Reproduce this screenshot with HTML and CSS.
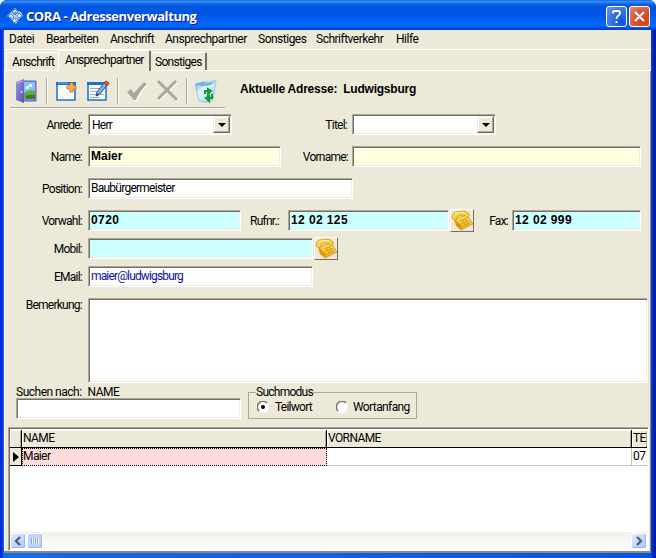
FILE: index.html
```html
<!DOCTYPE html>
<html lang="de">
<head>
<meta charset="utf-8">
<title>CORA - Adressenverwaltung</title>
<link rel="stylesheet" href="styles.css">
</head>
<body>
<svg width="0" height="0" class="defs">
  <defs>
    <linearGradient id="gold" x1="0" y1="0" x2="0" y2="1"><stop offset="0" stop-color="#ffe45c"/><stop offset="1" stop-color="#eea818"/></linearGradient>
    <linearGradient id="door" x1="0" y1="0" x2="1" y2="1"><stop offset="0" stop-color="#9a94e8"/><stop offset="1" stop-color="#5650b4"/></linearGradient>
    <linearGradient id="bin" x1="0" y1="0" x2="1" y2="1"><stop offset="0" stop-color="#5ba4dc"/><stop offset=".4" stop-color="#e4f8ff"/><stop offset="1" stop-color="#8cc4ec"/></linearGradient>
    <symbol id="phone" viewBox="0 0 22 21">
      <path d="M4 9 L16 5 L22 14 L10 20 Z" fill="url(#gold)" stroke="#c98d18" stroke-width=".7"/>
      <path d="M3 9 L5 16 L10 20 L11 16Z" fill="#df9510"/>
      <path d="M1 6 Q2 2 8 1.500 Q15 0 18 4 Q19 7 16 7.500 L14 5.500 Q10 4 6 6.500 L6 9 Q3 11 1 8Z" fill="#f9d548" stroke="#c68b17" stroke-width=".7"/>
      <path d="M9 11l7-3M10.500 13.500l7-3M12 16l7-3M11 9.500l4 6M14 8.500l4 6" stroke="#c48d22" stroke-width=".7"/>
      <path d="M4 3.500Q9 1.500 14 3" stroke="#fff09a" fill="none"/>
    </symbol>
  </defs>
</svg>
<div class="window">
  <header class="titlebar">
    <svg class="appicon" width="16" height="16" viewBox="0 0 16 16">
      <path d="M8 0L11 3 14 4 16 8 12 11 9 16 6 14 4 11 0 8 4 4Z" fill="#a8d4fc"/>
      <path d="M8 1l3 3-3 3-3-3zM12 5l3 3-3 2-2-2zM4 6l3 3-3 2-3-3zM8 10l3 1-3 4-3-2z" fill="#eef8ff" stroke="#174eaa" stroke-width=".7"/>
      <path d="M7 4h2v2H7zM3 9h2M8 12h1" stroke="#315f98" stroke-width=".7" fill="none"/>
    </svg>
    <h1>CORA - Adressenverwaltung</h1>
    <span class="capbtn help"><svg width="19" height="19" viewBox="0 0 19 19"><path d="M6 6.500V5.500Q6 4 7.500 4H11Q13 4 13 6Q13 7.500 11.500 8.500Q9.500 9.500 9.500 12M9.500 14V16" fill="none" stroke="#fff" stroke-width="1.900"/></svg></span>
    <span class="capbtn close"><svg width="19" height="19" viewBox="0 0 19 19"><path d="M5 5L14 14M14 5L5 14" stroke="#fff" stroke-width="2.200"/></svg></span>
  </header>
  <nav class="menu"><span class="m1">Datei</span><span class="m2">Bearbeiten</span><span class="m3">Anschrift</span><span class="m4">Ansprechpartner</span><span class="m5">Sonstiges</span><span class="m6">Schriftverkehr</span><span class="m7">Hilfe</span></nav>
  <div class="tabs"><span class="tab first">Anschrift</span><span class="tab active">Ansprechpartner</span><span class="tab last">Sonstiges</span></div>
  <main class="page">
    <div class="toolrow">
      <div class="toolbar">
        <svg class="i-door" width="22" height="24" viewBox="0 0 22 24">
          <path d="M6 2H20V22H6" fill="#8d87da" stroke="#625cb8"/>
          <path d="M8 3h11v17H8z" fill="#86c3f5"/><path d="M10 7h3v-2h3v3h-3v2h-3z" fill="#e7f7ff"/>
          <path d="M8 14Q13 10 19 12V20H8Z" fill="#67a83c"/><path d="M10 17Q14 15 19 16V20H10Z" fill="#3a7a2b"/>
          <path d="M0 3L8 0V24L0 21Z" fill="url(#door)"/><path d="M1 4L7 2" stroke="#bdb8f8"/><circle cx="5.500" cy="13" r="1" fill="#d8d5ff"/>
        </svg>
        <i class="sep s1"></i>
        <svg class="i-new" width="22" height="22" viewBox="0 0 22 22">
          <path d="M1 3H19V20H1Z" fill="#f8fcff" stroke="#1971d1" stroke-width="1.500"/><path d="M0 2H20V5H0Z" fill="#1971d1"/><path d="M2 3h10" stroke="#67b5f5"/>
          <path d="M13 4h3V1h3v3h3v3h-3v3h-3V7h-3z" transform="translate(-2 2)" fill="#ffb657" stroke="#d87820"/>
        </svg>
        <svg class="i-edit" width="23" height="22" viewBox="0 0 23 22">
          <path d="M1 3H19V20H1Z" fill="#f8fcff" stroke="#1971d1" stroke-width="1.500"/><path d="M0 2H20V5H0Z" fill="#1971d1"/>
          <path d="M3 8.500H14M3 11.500H16M3 14.500H17M3 17.500H13" stroke="#a2aab4"/>
          <path d="M10 12L17 3L20 5L13 14L9 16Z" fill="#78b6ed" stroke="#36577e"/><path d="M17 3L19 1L22 3L20 6Z" fill="#e65437" stroke="#a53724"/><path d="M9 16l1-3 2 2z" fill="#443b32"/>
        </svg>
        <i class="sep s2"></i>
        <svg class="i-check" width="23" height="23" viewBox="0 0 23 23"><path d="M2 13L6 10L9 14L19 3L22 5Q14 13 11 21H9Z" fill="#fff"/><path d="M1 12L5 9L8 13L18 2L21 4Q13 12 10 20H8Z" fill="#aaa799"/></svg>
        <svg class="i-cross" width="24" height="22" viewBox="0 0 24 22"><path d="M3 2L22 21M21 2L3 20" stroke="#fff" stroke-width="2.500"/><path d="M2 1L21 20M20 1L2 19" stroke="#aaa799" stroke-width="3"/></svg>
        <i class="sep s3"></i>
        <svg class="i-bin" width="23" height="25" viewBox="0 0 23 25">
          <path d="M1 5L8 3Q15 4 22 1L19 21Q12 25 5 22Z" fill="url(#bin)" stroke="#8ebfe5" stroke-width=".8"/><path d="M1 5L9 3Q15 5 21 2Q18 7 10 7Q4 7 1 5Z" fill="#72b4e3"/>
          <path d="M11 15V12H15M14 10L17 12L14 15ZM18 15V19H14M15 17L12 19L15 22Z" fill="none" stroke="#159b2d" stroke-width="2"/>
        </svg>
      </div>
      <strong class="current"><span>Aktuelle Adresse:</span><span>Ludwigsburg</span></strong>
    </div>
    <div class="row r1"><label>Anrede:</label><div class="field combo">Herr<i class="drop"></i></div><label class="l-titel">Titel:</label><div class="field combo"><i class="drop"></i></div></div>
    <div class="row r2"><label>Name:</label><div class="field yellow w193 b">Maier</div><label class="l-vor">Vorname:</label><div class="field yellow w289"></div></div>
    <div class="row r3"><label>Position:</label><div class="field w265">Baubürgermeister</div></div>
    <div class="row r4"><label>Vorwahl:</label><div class="field cyan w153 b num">0720</div><label class="l-ruf">Rufnr.:</label><div class="field cyan w161 b num">12 02 125</div><span class="phone"><svg width="22" height="21"><use href="#phone"/></svg></span><label class="l-fax">Fax:</label><div class="field cyan w129 b num">12 02 999</div></div>
    <div class="row r5"><label>Mobil:</label><div class="field cyan w225"></div><span class="phone"><svg width="22" height="21"><use href="#phone"/></svg></span></div>
    <div class="row r6"><label>EMail:</label><div class="field w225 mail">maier@ludwigsburg</div></div>
    <div class="row r7"><label>Bemerkung:</label><div class="field memo"></div></div>
    <div class="searchrow">
      <div class="search"><div class="caption"><span>Suchen nach:</span><span>NAME</span></div><div class="field w225"></div></div>
      <fieldset><legend>Suchmodus</legend><span class="radio"><svg width="12" height="12"><circle cx="6" cy="6" r="5" fill="#fff" stroke="#fff" stroke-width="2"/><path d="M2 10A5.300 5.300 0 0 1 10 2" fill="none" stroke="#77736a" stroke-width="1.500"/><circle cx="6" cy="6" r="2" fill="#000"/></svg>Teilwort</span><span class="radio second"><svg width="12" height="12"><circle cx="6" cy="6" r="5" fill="#fff" stroke="#fff" stroke-width="2"/><path d="M2 10A5.300 5.300 0 0 1 10 2" fill="none" stroke="#77736a" stroke-width="1.500"/></svg>Wortanfang</span></fieldset>
    </div>
    <div class="grid">
      <div class="cells head"><span></span><span>NAME</span><span>VORNAME</span><span>TE</span></div>
      <div class="cells data"><span class="ind"><svg width="6" height="10"><path d="M0 0L6 5L0 10Z"/></svg></span><span class="sel">Maier</span><span></span><span>07</span></div>
      <div class="scroll"><span class="sb"><svg width="14" height="14"><path d="M9 3L5 7L9 11" fill="none" stroke="#4d6185" stroke-width="2.400"/></svg></span><span class="sb thumb"><svg width="14" height="14"><path d="M3.500 4v6M5.500 4v6M7.500 4v6M9.500 4v6" stroke="#8da9ec"/><path d="M4.500 4v6M6.500 4v6M8.500 4v6M10.500 4v6" stroke="#edf3ff"/></svg></span><span class="sb right"><svg width="14" height="14"><path d="M5 3L9 7L5 11" fill="none" stroke="#4d6185" stroke-width="2.400"/></svg></span></div>
    </div>
  </main>
</div>
</body>
</html>
```
FILE: styles.css
```css
* { box-sizing: border-box; }
body { margin: 0; background: #fff; font: 12px/14px Roboto, "Liberation Sans", sans-serif; letter-spacing: -.5px; color: #000; overflow: hidden; }
.defs { display: block; }
svg { display: block; flex: none; }
.window { width: 656px; height: 558px; padding: 0 5px 5px 4px; border-radius: 7px 7px 0 0; overflow: hidden; background: linear-gradient(90deg, #0831d9 0, #0019cf 1px, #0855dd 3px, #166aee 4px, #0855e5 650px, #0029c5 653px, #00139d 656px); display: flex; flex-direction: column; }
.titlebar { height: 30px; flex: none; margin: 0 -5px 0 -4px; padding: 1px 6px 0 7px; display: flex; align-items: center; background: linear-gradient(#0a49bd 0, #3991ff 1px, #3186f8 2px, #0963e7 4px, #0055dd 7px, #0055e5 15px, #0264fa 21px, #0266ff 26px, #0053dc 28px, #003dc0 30px); }
h1 { margin: 1px auto 0 3px; color: #fff; font: bold 13px/16px "Open Sans", "Noto Sans", sans-serif; letter-spacing: -.42px; text-shadow: 1px 1px #0f1089; }
.capbtn { width: 21px; height: 21px; border: 1px solid #fff; border-radius: 3px; margin: 2px 0 0 2px; }
.help { background: radial-gradient(circle at 80% 80%, #0754e8, #326be6 45%, #7391e8); }
.close { background: radial-gradient(circle at 75% 75%, #d84412, #d95131 50%, #ec8a72); }
.menu { height: 20px; flex: none; background: #ece9d8; border-bottom: 1px solid #fff; padding: 2px 0 0 5px; display: flex; white-space: nowrap; }
.m1 { width: 37px; } .m2 { width: 64px; } .m3 { width: 55px; } .m4 { width: 93px; } .m5 { width: 58px; } .m6 { width: 80px; }
.tabs { height: 21px; flex: none; background: #ece9d8; border-bottom: 1px solid #fff; display: flex; align-items: flex-end; padding-left: 2px; letter-spacing: -.7px; }
.tab { height: 18px; padding: 2px 0 0 5px; border: 1px solid #fff; border-width: 1px 0 0 1px; border-radius: 2px 2px 0 0; }
.first { width: 52px; }
.active { width: 93px; height: 21px; padding: 2px 0 0 6px; margin-bottom: -1px; background: #ece9d8; border-right: 2px solid #716f64; }
.last { width: 56px; border-right: 2px solid #716f64; border-left: 0; padding-left: 4px; }
.page { flex: 1; min-height: 0; background: #ece9d8; border: solid #8d8a78; border-width: 0 1px 2px 0; padding-left: 4px; box-shadow: inset 1px 0 #fff; letter-spacing: -.75px; }
.toolrow { display: flex; height: 38px; }
.toolbar { width: 215px; height: 37px; margin-left: 2px; display: flex; align-items: center; border-bottom: 1px solid #aca899; box-shadow: 0 1px #fff; padding: 4px 0 0 6px; }
.sep { width: 2px; height: 26px; border-left: 1px solid #aca899; border-right: 1px solid #fff; }
.s1 { margin-left: 8px; } .i-new { margin-left: 8px; } .i-edit { margin-left: 9px; } .s2 { margin-left: 7px; } .i-check { margin-left: 7px; } .i-cross { margin-left: 7px; } .s3 { margin-left: 6px; } .i-bin { margin-left: 6px; }
.current { margin: 11px 0 0 15px; font: bold 12px/14px "Liberation Sans", sans-serif; letter-spacing: -.22px; display: flex; gap: 6px; }
.row { display: flex; height: 21px; white-space: nowrap; }
label { width: 74px; text-align: right; padding-top: 4px; margin-right: 6px; flex: none; }
.field { height: 21px; flex: none; border: 1px solid; border-color: #aca899 #fff #fff #aca899; box-shadow: inset 1px 1px #716f64, inset -1px -1px #f1efe2; background: #fff; padding: 2px 0 0 2px; }
.combo { width: 144px; display: flex; padding: 3px 1px 0 3px; }
.drop { width: 17px; height: 17px; margin: -2px 0 0 auto; background: #ece9d8; border: 1px solid; border-color: #f1efe2 #716f64 #716f64 #f1efe2; box-shadow: inset -1px -1px #aca899, inset 1px 1px #fff; display: grid; place-items: center; }
.drop::after { content: ""; border: 4px solid transparent; border-top-color: #000; border-bottom: 0; }
.yellow { background: #ffffe1; } .cyan { background: #ccffff; } .mail { color: #1010a0; letter-spacing: -.85px; }
.b { font: bold 12px/14px "Liberation Sans", sans-serif; letter-spacing: 0; }
.num { letter-spacing: .4px; }
.w193 { width: 193px; } .w289 { width: 289px; } .w265 { width: 265px; } .w153 { width: 153px; } .w161 { width: 161px; } .w129 { width: 129px; } .w225 { width: 225px; }
.r1 { margin-top: 5px; } .r2, .r3, .r4 { margin-top: 11px; } .r5, .r6 { margin-top: 7px; }
.r7 { margin-top: 11px; height: 85px; } .r7 label { padding-top: 0; }
.l-titel { width: 115px; margin-right: 5px; } .l-vor { width: 67px; margin-right: 4px; } .l-ruf { width: 38px; margin-right: 9px; } .l-fax { width: 34px; margin-right: 4px; }
.phone { width: 24px; height: 23px; margin: -1px 0 0 1px; border: 1px solid; border-color: #fff #716f64 #716f64 #fff; }
.memo { width: 560px; height: 85px; }
.searchrow { display: flex; height: 44px; padding-left: 8px; }
.search { width: 232px; padding-top: 2px; } .caption { display: flex; height: 13px; gap: 6px; line-height: 15px; letter-spacing: -.5px; }
fieldset { width: 169px; height: 34px; margin: 2px 0 0; padding: 0 0 0 8px; border: 1px solid #aca899; display: flex; min-width: 0; }
legend { padding: 0; height: 14px; line-height: 15px; margin-left: -1px; letter-spacing: -.75px; }
.radio { display: flex; gap: 6px; height: 14px; align-items: center; margin-top: 1px; white-space: nowrap; } .second { margin-left: 24px; gap: 5px; letter-spacing: -.6px; }
.grid { width: 641px; height: 124px; background: #fff; border: 1px solid; border-color: #aca899 #fff #fff #aca899; box-shadow: inset 1px 1px #716f64; padding: 2px 1px 1px 1px; display: flex; flex-direction: column; overflow: hidden; letter-spacing: -.6px; }
.cells { display: grid; grid-template-columns: 12px 305px 305px 15px; white-space: nowrap; flex: none; }
.cells span { overflow: hidden; padding: 1px 0 0 1px; }
.head { height: 18px; background: #ece9d8; border-bottom: 1px solid #000; }
.head span { border-right: 1px solid #000; box-shadow: inset 1px 1px #fff, inset -1px 0 #aca899; }
.head span:last-child { border: 0; }
.data { height: 18px; } .data span { border: 1px solid #c0c0c0; border-width: 0 1px 1px 0; }
.data .ind { background: #ece9d8; border-color: #000; padding: 4px 0 0 3px; }
.data .sel { background: #ffdcdc; border: 1px dotted #000; padding: 0; }
.data span:last-child { border-right: 0; }
.scroll { height: 17px; margin-top: auto; display: flex; background: linear-gradient(#f0f0e9, #fefefe); padding-top: 1px; }
.sb { width: 16px; height: 16px; border: 1px solid #fff; border-radius: 2px; background: linear-gradient(135deg, #e1eaff, #b1c7f8); box-shadow: inset -1px -1px #9cb5ed; }
.thumb { margin-left: 1px; background: #c3d3fd; } .right { margin-left: auto; }
```
